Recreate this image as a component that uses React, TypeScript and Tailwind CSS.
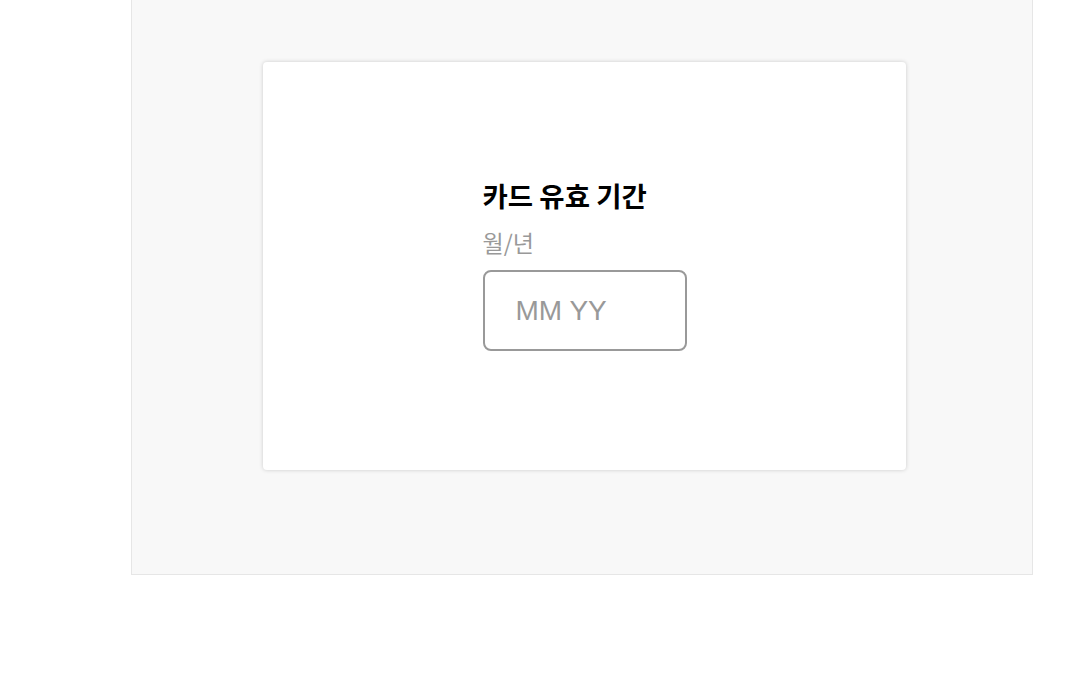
export default function App() {
  return (
    <div className="h-[677px] w-[1085px] bg-white" style={{ fontFamily: '"Noto Sans CJK KR", "Noto Sans", sans-serif' }}>
      <div className="ml-[131px] flex h-[575px] w-[902px] items-start border-b border-l border-r border-[#e6e6e6] bg-[#f8f8f8] pl-[131px] pt-[62px]">
        <div className="flex h-[408px] w-[643px] justify-center rounded-[4px] bg-white pt-[117px] shadow-[0_0_4px_rgba(0,0,0,0.18)]">
          <div className="flex w-[204px] flex-col">
            <h1 className="text-[27.5px] font-bold leading-[32px] text-black">카드 유효 기간</h1>
            <p className="mt-[17px] text-[23px] leading-[28px] text-[#999999]">월/년</p>
            <input
              className="mt-[14px] h-[81px] w-[204px] rounded-[8px] border-2 border-[#999999] bg-white pl-[31px] text-[28px] text-[#333] outline-none placeholder:text-[#999999]"
              style={{ fontFamily: '"Liberation Sans", Arial, sans-serif' }}
              placeholder="MM YY"
            />
          </div>
        </div>
      </div>
    </div>
  );
}
